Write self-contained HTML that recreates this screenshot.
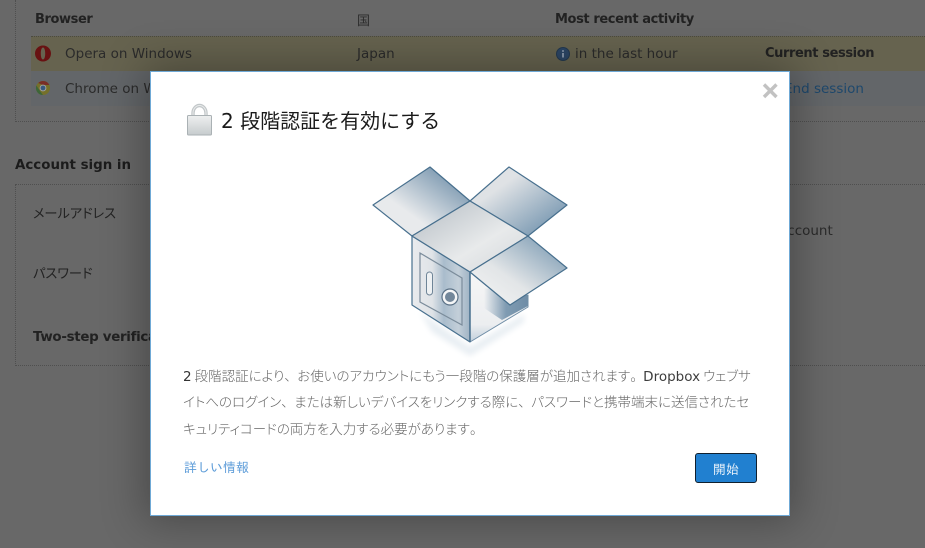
<!DOCTYPE html>
<html lang="ja">
<head>
<meta charset="utf-8">
<title>2 段階認証</title>
<style>
html,body{margin:0;padding:0;width:925px;height:548px;overflow:hidden;background:#686868}
body{position:relative;font-family:"Liberation Sans","IPAGothic",sans-serif;color:#2c2c2c}
.a{position:absolute;white-space:nowrap;line-height:18px}
.l{font-family:"DejaVu Sans","Noto Sans CJK JP",sans-serif;font-size:13.5px}
.b{font-family:"DejaVu Sans","Noto Sans CJK JP",sans-serif;font-size:13px;letter-spacing:-.4px;font-weight:bold;color:#222}
.t{color:#2b2b2b}
#modal{position:absolute;left:150px;top:71px;width:638px;height:443px;background:#fff;border:1px solid #6fa9d6;box-shadow:0 0 40px 6px rgba(0,0,0,.3)}
.p{position:absolute;left:183px;white-space:nowrap;font-size:13.5px;line-height:18px;color:#666;font-family:"Noto Sans CJK JP",sans-serif;font-weight:300;font-feature-settings:"palt"}
.p span{font-family:"DejaVu Sans",sans-serif;font-size:13.5px;color:#3d3d3d;font-weight:normal}
.p i{font-style:normal;display:inline-block;width:13px}
.j{font-family:"Noto Sans CJK JP",sans-serif;font-size:13.2px;font-feature-settings:"palt";color:#222}
</style>
</head>
<body>
<div class="a" style="left:15px;top:0;width:910px;height:122px;border-left:1px dotted #4f4f4f;border-bottom:1px dotted #4f4f4f;box-sizing:border-box"></div>
<div class="a" style="left:31px;top:36px;width:894px;height:35px;background:#66634f;border-top:1px dotted #4b4a40;box-sizing:border-box"></div>
<div class="a" style="left:31px;top:71px;width:894px;height:35px;background:#636669"></div>
<div class="a b" style="left:35px;top:11px">Browser</div>
<div class="a t" style="left:357px;top:11px;font-size:13px;font-family:'Noto Sans CJK JP',sans-serif">国</div>
<div class="a b" style="left:555px;top:11px">Most recent activity</div>
<svg class="a" style="left:35px;top:45px" width="16" height="17" viewBox="0 0 16 17"><path fill-rule="evenodd" d="M8 .5C12.500 .5 16 4 16 8.500S12.500 16.500 8 16.500 0 13 0 8.500 3.500 .5 8 .5zM8 2.500C6.600 2.500 5.800 5 5.800 8.500S6.600 14.500 8 14.500 10.200 12 10.200 8.500 9.400 2.500 8 2.500z" fill="#681212"/></svg>
<div class="a l t" style="left:65px;top:45px">Opera on Windows</div>
<div class="a l t" style="left:357px;top:45px">Japan</div>
<svg class="a" style="left:555px;top:46px" width="16" height="16" viewBox="0 0 16 16"><circle cx="8" cy="8" r="6.500" fill="#2c4665" stroke="#24394f"/><rect x="7" y="7" width="2" height="4.500" fill="#8494a8"/><rect x="7" y="4.200" width="2" height="1.600" fill="#8494a8"/></svg>
<div class="a l t" style="left:575px;top:45px">in the last hour</div>
<div class="a b" style="left:765px;top:45px">Current session</div>
<svg class="a" style="left:35px;top:80px" width="16" height="16" viewBox="0 0 16 16"><circle cx="8" cy="8" r="7" fill="#75702a"/><path d="M8 1a7 7 0 0 1 6.300 4H8L3.300 3A7 7 0 0 1 8 1z" fill="#7a2e26"/><path d="M1.400 5.500 5 11l3 4a7 7 0 0 1-6.600-9.500z" fill="#3d6638"/><circle cx="8" cy="8" r="3.400" fill="#a0a0a0"/><circle cx="8" cy="8" r="2.400" fill="#37597f"/></svg>
<div class="a l t" style="left:65px;top:80px">Chrome on Windows</div>
<div class="a l" style="left:784px;top:80px;color:#1e486c">End session</div>
<div class="a" style="left:15px;top:157px;font-family:'DejaVu Sans',sans-serif;font-size:13.4px;font-weight:bold;color:#1c1c1c">Account sign in</div>
<div class="a" style="left:15px;top:184px;width:910px;height:182px;border-left:1px dotted #4f4f4f;border-top:1px dotted #4f4f4f;border-bottom:1px dotted #4f4f4f;box-sizing:border-box"></div>
<div class="a j" style="left:33px;top:204px">メールアドレス</div>
<div class="a j" style="left:33px;top:264px">パスワード</div>
<div class="a b" style="left:33px;top:329px;font-size:13.4px;letter-spacing:-.3px">Two-step verification</div>
<div class="a l t" style="left:779px;top:222px">account</div>

<div id="modal"></div>

<svg class="a" style="left:760px;top:81px" width="20" height="20" viewBox="0 0 20 20"><path d="M4 3.500 16.500 16M16.500 3.500 4 16" stroke="#c2c2c2" stroke-width="3.400"/></svg>

<svg class="a" style="left:184px;top:103px" width="30" height="34" viewBox="0 0 30 34">
<defs><linearGradient id="lk" x1="0" y1="0" x2="0" y2="1"><stop offset="0" stop-color="#eef0f0"/><stop offset="1" stop-color="#c6cbcd"/></linearGradient></defs>
<path d="M9 14V10a6.500 7.500 0 0 1 13 0v4" fill="none" stroke="#c2c7c9" stroke-width="3.400"/>
<path d="M9 14V10a6.500 7.500 0 0 1 13 0v4" fill="none" stroke="#e9ebeb" stroke-width="1"/>
<rect x="3.500" y="12.500" width="24" height="19.500" rx="1" fill="url(#lk)" stroke="#aab1b4"/>
</svg>
<div class="a" style="left:221px;top:107px;font-size:20px;line-height:28px;color:#1a1a1a;font-family:'DejaVu Sans','Noto Sans CJK JP',sans-serif">2 段階認証を有効にする</div>

<svg class="a" style="left:360px;top:160px" width="220" height="200" viewBox="360 160 220 200">
<defs>
<linearGradient id="f1" x1="0" y1="1" x2="1" y2="0"><stop offset=".35" stop-color="#e8eaec"/><stop offset=".85" stop-color="#7a97af"/></linearGradient>
<linearGradient id="f2" x1="0" y1="0" x2="1" y2="1"><stop offset=".3" stop-color="#dfe2e5"/><stop offset=".78" stop-color="#88a3b9"/></linearGradient>
<linearGradient id="f3" x1="0" y1="0" x2="1" y2="1"><stop offset="0" stop-color="#b4bcc3"/><stop offset=".6" stop-color="#e8eaeb"/><stop offset="1" stop-color="#d2d6da"/></linearGradient>
<linearGradient id="f4" x1="1" y1="0" x2="0" y2="1"><stop offset=".15" stop-color="#8aa5ba"/><stop offset=".6" stop-color="#e2e5e7"/><stop offset="1" stop-color="#f6f6f6"/></linearGradient>
<linearGradient id="f5" x1="0" y1="0" x2="1" y2="0"><stop offset="0" stop-color="#e9ebee"/><stop offset=".35" stop-color="#dfe3e7"/><stop offset=".55" stop-color="#a9bccc"/><stop offset=".8" stop-color="#c3cfd9"/><stop offset="1" stop-color="#9fb3c4"/></linearGradient>
<linearGradient id="f6" x1="0" y1="0" x2="0" y2="1"><stop offset="0" stop-color="#f6f6f6"/><stop offset=".75" stop-color="#eceef0"/><stop offset="1" stop-color="#c2d0dc"/></linearGradient>
<linearGradient id="f7" x1="0" y1="0" x2="1" y2="0"><stop offset="0" stop-color="#7f9bb2" stop-opacity="0"/><stop offset=".5" stop-color="#7f9bb2"/><stop offset="1" stop-color="#6f8da6"/></linearGradient>
<filter id="bl" x="-20%" y="-40%" width="140%" height="180%"><feGaussianBlur stdDeviation="3"/></filter>
</defs>
<path d="M420 312 470 347 524 314V322L470 356 432 332z" fill="#e8eef3" filter="url(#bl)"/>
<g stroke="#48708e" stroke-width="1.200" stroke-linejoin="round">
<path d="M373 205 430 167 470 201 412 236z" fill="url(#f1)"/>
<path d="M470 201 509 167 567 205 528 236z" fill="url(#f2)"/>
<path d="M412 236 470 272V342L412 305z" fill="url(#f5)"/>
<path d="M470 272 510 305 528 295V307L470 342z" fill="url(#f6)" stroke="#6f8da6" stroke-width="1"/>
<path d="M484 288 528 295V306L502 320 484 308z" fill="url(#f7)" stroke="none"/>
<path d="M412 236 470 201 528 236 470 272z" fill="url(#f3)"/>
<path d="M528 236 567 268 510 305 470 272z" fill="url(#f4)"/>
</g>
<path d="M470 272V342" stroke="#48708e" stroke-width="1.500"/>
<path d="M420 253 462 278V325L420 302z" fill="none" stroke="#7b8c9b" stroke-width="1.200"/>
<rect x="426.500" y="272" width="6" height="23" rx="3" fill="#eef1f3" stroke="#6f8598"/>
<circle cx="450" cy="297" r="8" fill="#f5f6f7" stroke="#5b7186" stroke-width="1.200"/>
<circle cx="450" cy="297" r="5" fill="#73879a"/>
</svg>

<div class="p" style="top:366px"><span style="color:#333">2</span> 段階認証により<i>、</i>お使いのアカウントにもう一段階の保護層が追加されます<i>。</i><span>Dropbox</span> ウェブサ</div>
<div class="p" style="top:392px">イトへのログイン<i>、</i>または新しいデバイスをリンクする際に<i>、</i>パスワードと携帯端末に送信されたセ</div>
<div class="p" style="top:419px">キュリティコードの両方を入力する必要があります<i>。</i></div>
<div class="a" style="left:184px;top:459px;font-size:13px;color:#5b9bd8">詳しい情報</div>
<div class="a" style="left:695px;top:453px;width:62px;height:30px;box-sizing:border-box;background:#2180d0;border:1px solid #10202f;border-radius:3px;color:#e8f1fa;font-size:13px;line-height:31px;text-align:center">開始</div>
</body>
</html>
